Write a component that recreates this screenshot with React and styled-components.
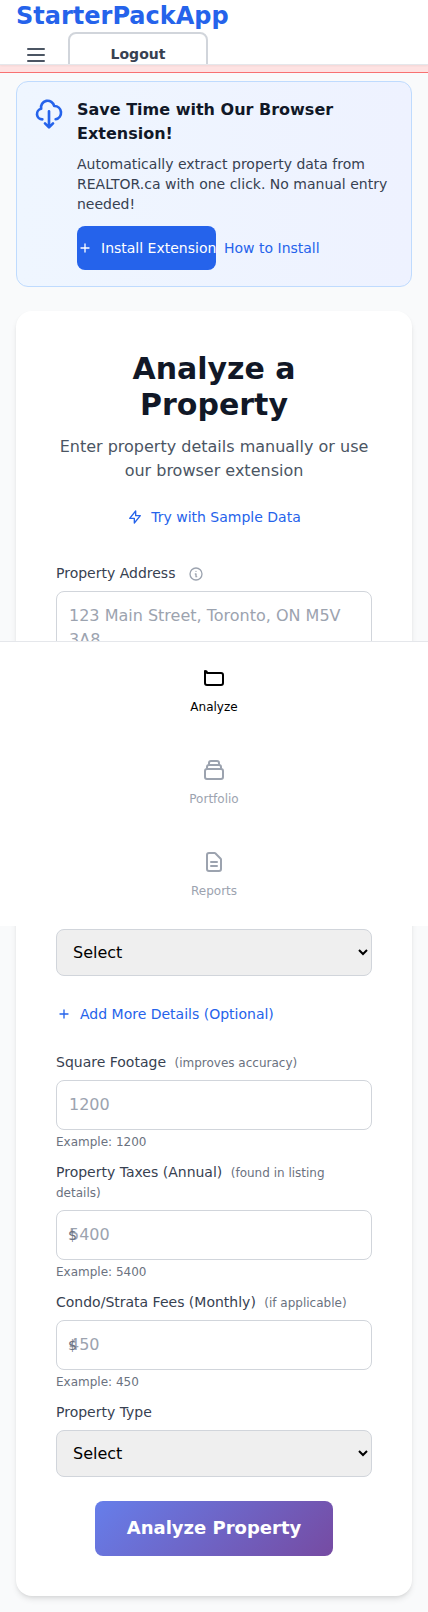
import React from "react";
import styled, { createGlobalStyle, css } from "styled-components";

const GlobalStyle = createGlobalStyle`
  *, *::before, *::after { box-sizing: border-box; }
  body {
    margin: 0;
    background: #f9fafb;
    color: #111827;
    font-family: "DejaVu Sans", sans-serif;
    font-size: 16px;
    line-height: 24px;
  }
  h1, h2, p { margin: 0; }
  button, input, textarea, select { font-family: inherit; }
  svg { display: block; flex-shrink: 0; }
`;

const Page = styled.div`
  position: relative;
  display: flex;
  flex-direction: column;
  width: 100%;
  min-height: 1612px;
`;

const Header = styled.header`
  position: relative;
  z-index: 2;
  height: 65px;
  padding: 0 16px;
  overflow: hidden;
  background: #fff;
  border-bottom: 1px solid #e5e7eb;
  box-shadow: 0 1px 2px rgba(0, 0, 0, 0.05);
`;

const Brand = styled.div`
  height: 32px;
  color: #2563eb;
  font-size: 24px;
  font-weight: 700;
  line-height: 32px;
`;

const HeaderActions = styled.div`
  display: flex;
  gap: 12px;
`;

const MenuButton = styled.button`
  width: 40px;
  height: 44px;
  padding: 11px 8px 9px;
  border: 0;
  background: none;
  color: #4b5563;
`;

const LogoutButton = styled.button`
  width: 140px;
  height: 44px;
  padding: 0;
  border: 2px solid #d1d5db;
  border-radius: 8px;
  background: #fff;
  color: #374151;
  font-size: 14px;
  font-weight: 600;
  line-height: 20px;
`;

const AlertStrip = styled.div`
  height: 8px;
  background: #fee2e2;
  border-bottom: 1px solid #f87171;
`;

const Main = styled.main`
  display: flex;
  flex-direction: column;
  gap: 24px;
  padding: 8px 16px 16px;
`;

const Promo = styled.section`
  display: flex;
  align-items: flex-start;
  gap: 12px;
  padding: 16px;
  border: 1px solid #bfdbfe;
  border-radius: 12px;
  background: linear-gradient(to right, #eff6ff, #eef2ff);
  color: #2563eb;
`;

const PromoBody = styled.div`
  flex: 1;
  min-width: 0;
`;

const PromoTitle = styled.h2`
  color: #111827;
  font-size: 16px;
  font-weight: 600;
  line-height: 24px;
`;

const PromoText = styled.p`
  margin: 8px 0 12px;
  color: #374151;
  font-size: 14px;
  line-height: 20px;
`;

const PromoActions = styled.div`
  display: flex;
  align-items: center;
  gap: 8px;
`;

const InstallButton = styled.button`
  display: flex;
  align-items: center;
  gap: 8px;
  width: 139px;
  height: 44px;
  padding: 0;
  overflow: hidden;
  border: 0;
  border-radius: 8px;
  background: #2563eb;
  color: #fff;
  font-size: 14px;
  line-height: 20px;
  white-space: nowrap;
`;

const TextButton = styled.button`
  display: inline-flex;
  align-items: center;
  gap: 8px;
  height: 44px;
  padding: 0;
  border: 0;
  background: none;
  color: #2563eb;
  font-size: 14px;
  line-height: 20px;
  ${(p) => p.$spaced && css`margin: ${p.$spaced};`}
`;

const Card = styled.section`
  display: flex;
  flex-direction: column;
  padding: 40px;
  border-radius: 16px;
  background: #fff;
  box-shadow: 0 4px 6px -1px rgba(0, 0, 0, 0.1), 0 2px 4px -2px rgba(0, 0, 0, 0.1);
`;

const Intro = styled.div`
  display: flex;
  flex-direction: column;
  align-items: center;
  text-align: center;
`;

const Title = styled.h1`
  font-size: 30px;
  font-weight: 700;
  line-height: 36px;
`;

const Subtitle = styled.p`
  margin-top: 12px;
  color: #4b5563;
`;

const Fields = styled.div`
  display: flex;
  flex-direction: column;
  gap: 12px;
`;

const Field = styled.div`
  display: flex;
  flex-direction: column;
`;

const Label = styled.label`
  margin-bottom: 8px;
  color: #374151;
  font-size: 14px;
  line-height: 20px;
`;

const LabelRow = styled.div`
  display: flex;
  gap: 13px;

  svg { margin-top: 3px; color: #9ca3af; }
`;

const Hint = styled.span`
  margin-left: 4px;
  color: #6b7280;
  font-size: 12px;
  line-height: 16px;
`;

const controlStyle = css`
  display: block;
  width: 100%;
  margin: 0;
  padding: 12px;
  border: 1px solid #d1d5db;
  border-radius: 8px;
  font-size: 16px;
  line-height: 24px;

  &::placeholder { color: #9ca3af; opacity: 1; }
`;

const TextArea = styled.textarea`
  ${controlStyle}
  height: 74px;
  margin-bottom: 264px;
  overflow: hidden;
  resize: none;
`;

const Input = styled.input`
  ${controlStyle}
  height: 50px;
  padding: 11px 12px 13px;
`;

const Select = styled.select`
  ${controlStyle}
  height: 47px;
  background-color: #efefef;
  color: #000;
`;

const InputWrap = styled.div`
  position: relative;
`;

const Currency = styled.span`
  position: absolute;
  top: 15px;
  left: 12px;
  color: #6b7280;
  font-size: 14px;
  line-height: 20px;
`;

const Example = styled.p`
  margin-top: 4px;
  color: #6b7280;
  font-size: 12px;
  line-height: 16px;
`;

const SubmitButton = styled.button`
  align-self: center;
  width: 238px;
  height: 55px;
  margin-top: 24px;
  padding: 0 0 2px;
  border: 0;
  border-radius: 8px;
  background: linear-gradient(135deg, #667eea 0%, #764ba2 100%);
  color: #fff;
  font-size: 18px;
  font-weight: 600;
`;

const BottomNav = styled.nav`
  position: absolute;
  z-index: 3;
  top: 641px;
  left: 0;
  right: 0;
  height: 285px;
  border-top: 1px solid #e5e7eb;
  background: #fff;
`;

const NavItem = styled.a`
  display: flex;
  flex-direction: column;
  align-items: center;
  gap: 9px;
  height: 92px;
  padding-top: 24px;
  color: ${(p) => (p.$active ? "#000" : "#9ca3af")};
  font-size: 12px;
  line-height: 16px;
`;

const paths = {
  menu: "M4 6h16M4 12h16M4 18h16",
  cloud: "M7 16a4 4 0 01-.88-7.903A5 5 0 1115.9 6L16 6a5 5 0 011 9.9M9 19l3 3m0 0l3-3m-3 3V10",
  plus: "M12 6v6m0 0v6m0-6h6m-6 0H6",
  bolt: "M13 10V3L4 14h7v7l9-11h-7z",
  info: "M13 16h-1v-4h-1m1-4h.01M21 12a9 9 0 11-18 0 9 9 0 0118 0z",
  folder: "M3 7v10a2 2 0 002 2h14a2 2 0 002-2V9a2 2 0 00-2-2H5a2 2 0 00-2-2z",
  stack:
    "M19 11H5m14 0a2 2 0 012 2v6a2 2 0 01-2 2H5a2 2 0 01-2-2v-6a2 2 0 012-2m14 0V9a2 2 0 00-2-2M5 11V9a2 2 0 012-2m0 0V5a2 2 0 012-2h6a2 2 0 012 2v2M7 7h10",
  report:
    "M9 12h6m-6 4h6m2 5H7a2 2 0 01-2-2V5a2 2 0 012-2h5.586a1 1 0 01.707.293l5.414 5.414a1 1 0 01.293.707V19a2 2 0 01-2 2z",
};

const Icon = ({ name, size = 24 }) => (
  <svg
    width={size}
    height={size}
    viewBox="0 0 24 24"
    fill="none"
    stroke="currentColor"
    strokeWidth="2"
    strokeLinecap="round"
    strokeLinejoin="round"
    aria-hidden="true"
  >
    <path d={paths[name]} />
  </svg>
);

const NumberField = ({ label, hint, example, currency }) => (
  <Field>
    <Label>
      {label} <Hint>{hint}</Hint>
    </Label>
    <InputWrap>
      <Input placeholder={example} />
      {currency && <Currency>$</Currency>}
    </InputWrap>
    <Example>Example: {example}</Example>
  </Field>
);

const navItems = [
  { icon: "folder", label: "Analyze", active: true },
  { icon: "stack", label: "Portfolio" },
  { icon: "report", label: "Reports" },
];

export default function App() {
  return (
    <Page>
      <GlobalStyle />
      <Header>
        <Brand>StarterPackApp</Brand>
        <HeaderActions>
          <MenuButton>
            <Icon name="menu" />
          </MenuButton>
          <LogoutButton>Logout</LogoutButton>
        </HeaderActions>
      </Header>
      <AlertStrip />
      <Main>
        <Promo>
          <Icon name="cloud" size={32} />
          <PromoBody>
            <PromoTitle>Save Time with Our Browser Extension!</PromoTitle>
            <PromoText>
              Automatically extract property data from REALTOR.ca with one click. No manual entry needed!
            </PromoText>
            <PromoActions>
              <InstallButton>
                <Icon name="plus" size={16} />
                Install Extension
              </InstallButton>
              <TextButton>How to Install</TextButton>
            </PromoActions>
          </PromoBody>
        </Promo>

        <Card>
          <Intro>
            <Title>Analyze a Property</Title>
            <Subtitle>Enter property details manually or use our browser extension</Subtitle>
            <TextButton $spaced="12px 0 24px">
              <Icon name="bolt" size={16} />
              Try with Sample Data
            </TextButton>
          </Intro>

          <Field>
            <LabelRow>
              <Label>Property Address</Label>
              <Icon name="info" size={16} />
            </LabelRow>
            <TextArea placeholder="123 Main Street, Toronto, ON M5V 3A8" />
            <Select>
              <option>Select</option>
            </Select>
          </Field>

          <TextButton $spaced="16px 0">
            <Icon name="plus" size={16} />
            Add More Details (Optional)
          </TextButton>

          <Fields>
            <NumberField label="Square Footage" hint="(improves accuracy)" example="1200" />
            <NumberField
              label="Property Taxes (Annual)"
              hint="(found in listing details)"
              example="5400"
              currency
            />
            <NumberField
              label="Condo/Strata Fees (Monthly)"
              hint="(if applicable)"
              example="450"
              currency
            />
            <Field>
              <Label>Property Type</Label>
              <Select>
                <option>Select</option>
              </Select>
            </Field>
          </Fields>

          <SubmitButton>Analyze Property</SubmitButton>
        </Card>
      </Main>

      <BottomNav>
        {navItems.map((item) => (
          <NavItem key={item.label} $active={item.active}>
            <Icon name={item.icon} />
            {item.label}
          </NavItem>
        ))}
      </BottomNav>
    </Page>
  );
}
